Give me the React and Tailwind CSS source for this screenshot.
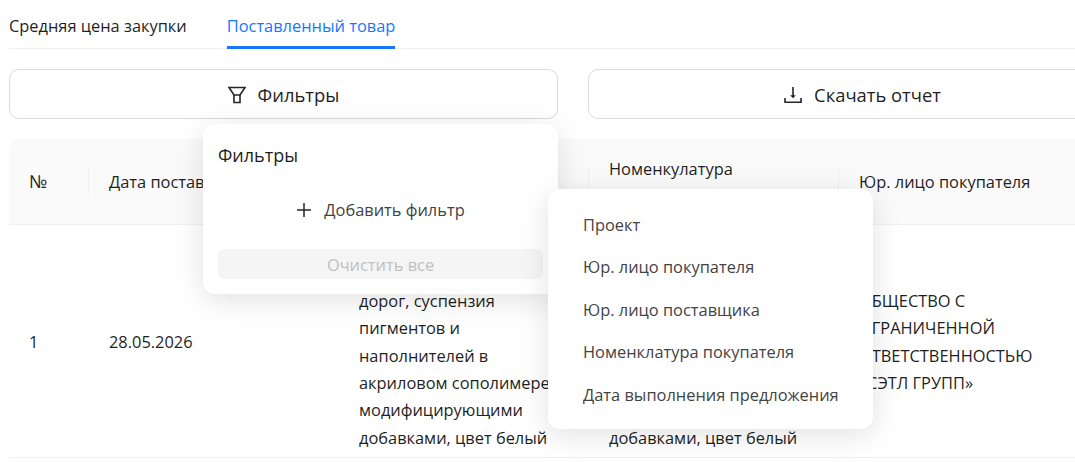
const FilterIcon = () => (
  <svg width="18" height="18" viewBox="0 0 18 18" fill="none" stroke="#262626" strokeWidth="1.6">
    <path d="M1 1.5h16l-5 7.5h-6z" />
    <path d="M6 9v7.5h6v-7.5" />
  </svg>
);

const DownloadIcon = () => (
  <svg width="18" height="18" viewBox="0 0 18 18" fill="none" stroke="#262626" strokeWidth="1.6">
    <path d="M9 1v10" />
    <path d="M9 12.2l-2.8-3h5.6z" fill="#262626" stroke="none" />
    <path d="M1 12v4.2h16V12" />
  </svg>
);

const PlusIcon = () => (
  <svg width="16" height="16" viewBox="0 0 16 16" fill="none" stroke="#262626" strokeWidth="1.5">
    <path d="M8 1v14M1 8h14" />
  </svg>
);

const material = [
  "Краска для разметки",
  "автомобильных",
  "дорог, суспензия",
  "пигментов и",
  "наполнителей в",
  "акриловом сополимере",
  "модифицирующими",
  "добавками, цвет белый",
];

const MaterialCell = () => (
  <div className="w-[250px] shrink-0 px-5 whitespace-nowrap">
    {material.map((line) => (
      <div key={line}>{line}</div>
    ))}
  </div>
);

const options = [
  "Проект",
  "Юр. лицо покупателя",
  "Юр. лицо поставщика",
  "Номенклатура покупателя",
  "Дата выполнения предложения",
];

export default function App() {
  return (
    <div className="relative w-[1075px] h-[462px] overflow-hidden bg-white px-[9px] text-[16.4px] leading-[27.4px] text-[#1f1f1f] font-['Open_Sans',sans-serif]">
      <div className="flex gap-10 h-[49px] border-b border-[#f0f0f0] w-[1200px]">
        <div className="pt-3">Средняя цена закупки</div>
        <div className="pt-3 h-[49px] border-b-[3px] border-[#1677ff] text-[#1677ff]">Поставленный товар</div>
      </div>

      <div className="flex gap-[30px] mt-5 w-[1128px] text-[18.4px]">
        <button className="flex-1 h-[50px] pt-[1px] flex items-center justify-center gap-3 border border-[#d9d9d9] rounded-[10px]">
          <FilterIcon />
          Фильтры
        </button>
        <button className="flex-1 h-[50px] pt-[1px] flex items-center justify-center gap-3 border border-[#d9d9d9] rounded-[10px]">
          <DownloadIcon />
          Скачать отчет
        </button>
      </div>

      <div className="mt-5 w-[1300px]">
        <div className="flex items-center h-[86px] bg-[#fafafa] border-b border-[#f0f0f0] rounded-t-[10px]">
          <div className="w-[80px] px-5 border-r border-[#f0f0f0] h-[27px] text-[18px]">№</div>
          <div className="w-[250px] px-5 border-r border-[#f0f0f0] h-[27px] whitespace-nowrap">Дата поставки</div>
          <div className="w-[250px] px-5 border-r border-[#f0f0f0] h-[27px] whitespace-nowrap">Номенклатура</div>
          <div className="w-[250px] px-5 border-r border-[#f0f0f0] h-[27px]">
            <div className="-mt-[13px]">Номенкулатура</div>
          </div>
          <div className="w-[250px] px-5 pt-[1px] whitespace-nowrap">Юр. лицо покупателя</div>
        </div>
        <div className="flex items-center h-[233px] pt-[1px] border-b border-[#f0f0f0]">
          <div className="w-[80px] px-5">1</div>
          <div className="w-[250px] px-5">28.05.2026</div>
          <MaterialCell />
          <MaterialCell />
          <div className="w-[250px] px-5">
            <div>ОБЩЕСТВО С</div>
            <div>ОГРАНИЧЕННОЙ</div>
            <div>ОТВЕТСТВЕННОСТЬЮ</div>
            <div>«СЭТЛ ГРУПП»</div>
          </div>
        </div>
      </div>

      <div className="absolute left-[203px] top-[124px] w-[355px] h-[170px] bg-white rounded-[12px] shadow-[0_6px_30px_rgba(0,0,0,0.12)] px-[15px] pt-[18px]">
        <div className="text-[18px]">Фильтры</div>
        <div className="flex items-center justify-center gap-3 mt-[27px] h-[27px] text-[#434343]">
          <PlusIcon />
          Добавить фильтр
        </div>
        <div className="mt-[26px] h-[30px] pt-[1px] rounded-[6px] bg-[#f5f5f5] flex items-center justify-center text-[#bfbfbf]">
          Очистить все
        </div>
      </div>

      <div className="absolute left-[548px] top-[189px] w-[325px] h-[240px] bg-white rounded-[12px] shadow-[0_6px_30px_rgba(0,0,0,0.12)] pl-[35px] pt-[14px] text-[#434343]">
        {options.map((o) => (
          <div key={o} className="h-[42.5px] flex items-center whitespace-nowrap">{o}</div>
        ))}
      </div>
    </div>
  );
}
